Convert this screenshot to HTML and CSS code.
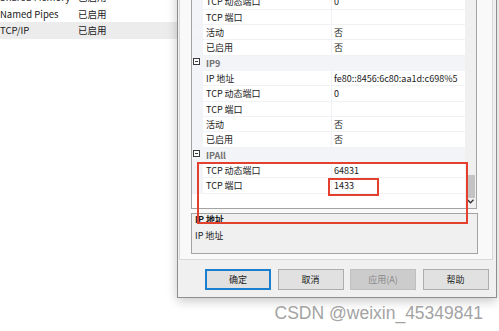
FILE: index.html
```html
<!DOCTYPE html>
<html lang="zh-CN">
<head>
  <meta charset="UTF-8">
  <meta name="viewport" content="width=device-width, initial-scale=1.0">
  <title>TCP/IP 属性</title>
  <link rel="stylesheet" href="styles.css">
</head>
<body>
  <div class="desktop">
    <!-- protocol list behind the dialog -->
    <ul class="protocols">
      <li><span class="proto-name">Shared Memory</span><span>已启用</span></li>
      <li><span class="proto-name">Named Pipes</span><span>已启用</span></li>
      <li class="selected"><span class="proto-name">TCP/IP</span><span>已启用</span></li>
    </ul>

    <div class="dialog">
      <div class="page">
        <div class="grid">
          <div class="rows">
            <div class="row"><span class="gutter"></span><span class="name">IP 地址</span><span class="value">::1</span></div>
            <div class="row"><span class="gutter"></span><span class="name">TCP 动态端口</span><span class="value">0</span></div>
            <div class="row"><span class="gutter"></span><span class="name">TCP 端口</span><span class="value"></span></div>
            <div class="row"><span class="gutter"></span><span class="name">活动</span><span class="value">否</span></div>
            <div class="row"><span class="gutter"></span><span class="name">已启用</span><span class="value">否</span></div>
            <div class="row category"><span class="gutter"><i class="toggle"></i></span><span class="name">IP9</span></div>
            <div class="row"><span class="gutter"></span><span class="name">IP 地址</span><span class="value">fe80::8456:6c80:aa1d:c698%5</span></div>
            <div class="row"><span class="gutter"></span><span class="name">TCP 动态端口</span><span class="value">0</span></div>
            <div class="row"><span class="gutter"></span><span class="name">TCP 端口</span><span class="value"></span></div>
            <div class="row"><span class="gutter"></span><span class="name">活动</span><span class="value">否</span></div>
            <div class="row"><span class="gutter"></span><span class="name">已启用</span><span class="value">否</span></div>
            <div class="row category"><span class="gutter"><i class="toggle"></i></span><span class="name">IPAll</span></div>
            <div class="row"><span class="gutter"></span><span class="name">TCP 动态端口</span><span class="value">64831</span></div>
            <div class="row"><span class="gutter"></span><span class="name">TCP 端口</span><span class="value">1433</span></div>
          </div>
          <div class="scrollbar">
            <div class="thumb"></div>
            <svg class="arrow" width="7" height="5" viewBox="0 0 7 5"><path d="M0.5 0.8 L3.5 3.8 L6.5 0.8" fill="none" stroke="#333" stroke-width="1.3"/></svg>
          </div>
        </div>
        <div class="help">
          <div class="help-title">IP 地址</div>
          <div class="help-text">IP 地址</div>
        </div>
      </div>
      <div class="buttons">
        <button class="default">确定</button>
        <button>取消</button>
        <button disabled>应用(A)</button>
        <button>帮助</button>
      </div>
    </div>

    <!-- annotation boxes drawn over the screenshot -->
    <div class="mark mark-big"></div>
    <div class="mark mark-small"></div>

    <div class="watermark">CSDN @weixin_45349841</div>
  </div>
</body>
</html>
```

FILE: styles.css
```css
body {
  margin: 0;
  background: #fff;
  font-family: "Noto Sans CJK SC", "Noto Sans", sans-serif;
  color: #1a1a1a;
}
.desktop {
  position: relative;
  width: 499px;
  height: 331px;
  overflow: hidden;
}
.protocols {
  list-style: none;
  margin: -11px 0 0 0;
  padding: 0;
  width: 177px;
  font-size: 9.5px;
}
.protocols li {
  display: flex;
  height: 16.5px;
  line-height: 16.5px;
  padding-left: 0;
}
.protocols li.selected {
  background: #ececec;
}
.proto-name {
  width: 80px;
  margin-left: -2px;
  padding-left: 2px;
  box-sizing: border-box;
}
.dialog {
  position: absolute;
  left: 177px;
  top: -30px;
  width: 320px;
  box-sizing: border-box;
  border: 1px solid #8e8e8e;
  background: #f0f0f0;
  box-shadow: 0 3px 10px rgba(0, 0, 0, 0.22);
}
.page {
  margin: 0 3px 0 1px;
  border: 1px solid #d9d9d9;
  background: #f9f9f9;
  padding: 6px 15px 5px 11px;
}
.grid {
  display: flex;
  height: 231px;
  box-sizing: border-box;
  border: 1px solid #a3a3a3;
  background: #fff;
}
.rows {
  flex: 1;
  font-size: 9px;
}
.row {
  display: flex;
  height: 15.333px;
  line-height: 15px;
  box-sizing: border-box;
  border-bottom: 1px solid #f1f2f6;
}
.gutter {
  width: 11px;
  flex: none;
  background: #f3f4f8;
  position: relative;
}
.name {
  width: 128px;
  flex: none;
  padding-left: 3px;
  box-sizing: border-box;
  white-space: nowrap;
  overflow: hidden;
}
.value {
  flex: 1;
  border-left: 1px solid #f1f2f6;
  padding-left: 2px;
  white-space: nowrap;
}
.category {
  background: #f3f4f8;
  border-bottom-color: #f3f4f8;
}
.category .name {
  color: #707070;
  font-weight: bold;
}
.toggle {
  position: absolute;
  left: 1px;
  top: 2px;
  width: 7px;
  height: 7px;
  box-sizing: border-box;
  border: 1px solid #3c3c3c;
  background: #fff;
}
.toggle::after {
  content: "";
  position: absolute;
  left: 1px;
  right: 1px;
  top: 2px;
  height: 1px;
  background: #3c3c3c;
}
.scrollbar {
  width: 11px;
  flex: none;
  background: #f0f0f0;
  display: flex;
  flex-direction: column;
  align-items: center;
  justify-content: flex-end;
  padding-bottom: 4px;
  box-sizing: border-box;
}
.thumb {
  width: 8px;
  height: 23px;
  background: #c3c3c3;
}
.arrow {
  margin-top: 1px;
}
.help {
  margin-top: 4px;
  height: 41px;
  width: 287px;
  box-sizing: border-box;
  border: 1px solid #a3a3a3;
  background: #f0f0f0;
  padding: 0 3px;
  font-size: 9px;
}
.help-title {
  font-weight: bold;
  line-height: 11px;
}
.help-text {
  margin-top: 4.5px;
  line-height: 11px;
}
.buttons {
  display: flex;
  gap: 6.5px;
  padding: 9px 0 7px 27px;
}
button {
  width: 66px;
  height: 21px;
  box-sizing: border-box;
  border: 1px solid #adadad;
  background: #e1e1e1;
  font-family: "Noto Sans CJK SC", "Noto Sans", sans-serif;
  font-size: 9px;
  color: #1a1a1a;
  padding: 0;
}
button.default {
  border: 2px solid #1b7fd0;
}
button:disabled {
  background: #cccccc;
  border-color: #bfbfbf;
  color: #8a8a8a;
}
.mark {
  position: absolute;
  border: 2px solid #e3402d;
  box-sizing: border-box;
}
.mark-big {
  left: 197px;
  top: 162px;
  width: 271px;
  height: 62px;
}
.mark-small {
  left: 328px;
  top: 178px;
  width: 51px;
  height: 18px;
}
.watermark {
  position: absolute;
  right: 16px;
  top: 304px;
  font-family: "Liberation Sans", Arial, sans-serif;
  font-size: 17.5px;
  line-height: 18px;
  color: #a3a3a3;
  text-shadow: 0 0 1px #fff;
}
```
